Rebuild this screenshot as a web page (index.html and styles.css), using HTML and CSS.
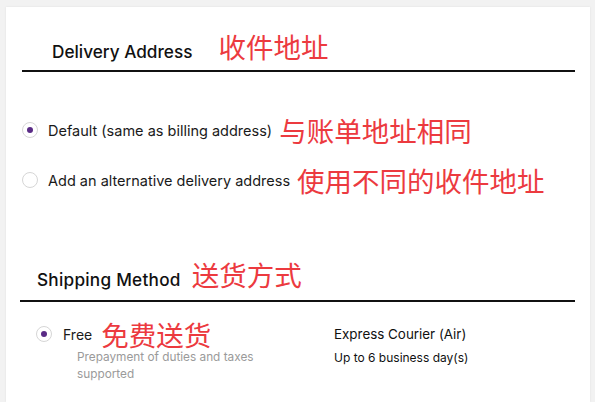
FILE: index.html
```html
<!DOCTYPE html>
<html lang="en">
<head>
<meta charset="utf-8">
<title>Delivery</title>
<link rel="stylesheet" href="styles.css">
</head>
<body>
<div class="card">
  <div class="section-head head-delivery">
    <span class="title">Delivery Address</span>
    <span class="note note-gap-lg">收件地址</span>
  </div>
  <div class="options">
    <div class="option">
      <span class="radio checked"></span>
      <span class="label">Default (same as billing address)</span>
      <span class="note note-gap-sm">与账单地址相同</span>
    </div>
    <div class="option">
      <span class="radio"></span>
      <span class="label">Add an alternative delivery address</span>
      <span class="note note-gap-sm">使用不同的收件地址</span>
    </div>
  </div>
  <div class="section-head head-shipping">
    <span class="title title-wide">Shipping Method</span>
    <span class="note note-gap-md">送货方式</span>
  </div>
  <div class="shipping">
    <div class="ship-choice">
      <div class="option ship-row">
        <span class="radio checked"></span>
        <span class="label label-free">Free</span>
        <span class="note note-gap-xs">免费送货</span>
      </div>
      <p class="desc">Prepayment of duties and taxes<br>supported</p>
    </div>
    <div class="ship-info">
      <div class="ship-name">Express Courier (Air)</div>
      <div class="ship-time">Up to 6 business day(s)</div>
    </div>
  </div>
</div>
</body>
</html>
```
FILE: styles.css
```css
html, body {
  margin: 0;
  padding: 0;
  background: #f2f2f2;
  height: 402px;
  overflow: hidden;
}
body {
  font-family: Inter, "Noto Sans", "Noto Sans CJK SC", sans-serif;
  color: #111;
}
.card {
  margin: 7px 5px 0 6px;
  height: 395px;
  background: #fff;
  box-shadow: 0 0 2px rgba(0, 0, 0, 0.08);
}
.section-head {
  display: flex;
  align-items: baseline;
  border-bottom: 2px solid #111;
  padding-bottom: 7px;
}
.head-delivery {
  margin: 0 15px 0 16px;
  padding-top: 23px;
  padding-left: 30px;
  padding-bottom: 8px;
}
.head-shipping {
  margin: 42px 15px 0 14px;
  padding-top: 11px;
  padding-left: 17px;
  padding-bottom: 10px;
}
.title {
  font-size: 17.2px;
  font-weight: 500;
}
.title-wide {
  letter-spacing: 0.25px;
}
.note {
  font-family: "Noto Sans CJK SC", sans-serif;
  font-size: 27.5px;
  line-height: 32px;
  color: #ec3a3f;
}
.note-gap-lg { margin-left: 26px; }
.note-gap-md { margin-left: 11px; }
.note-gap-sm { margin-left: 7px; }
.note-gap-xs { margin-left: 9px; }
.options {
  margin: 33px 0 0 16px;
}
.option {
  display: flex;
  align-items: center;
  height: 50px;
}
.radio {
  box-sizing: border-box;
  width: 16px;
  height: 16px;
  border: 1px solid #d6d6d6;
  border-radius: 50%;
  margin-right: 10px;
  display: flex;
  align-items: center;
  justify-content: center;
  flex: none;
}
.radio.checked::after {
  content: "";
  width: 6px;
  height: 6px;
  border-radius: 50%;
  background: #5a2b86;
}
.label {
  font-size: 14.5px;
  color: #1a1a1a;
}
.label-free {
  font-size: 14px;
}
.shipping {
  display: flex;
  margin: 17px 0 0 30px;
}
.ship-choice {
  width: 298px;
}
.ship-row {
  height: 30px;
}
.ship-row .note {
  line-height: 26px;
}
.ship-row .radio {
  margin-right: 11px;
}
.desc {
  margin: 0 0 0 41px;
  font-size: 11.8px;
  line-height: 17px;
  color: #9a9a9a;
}
.ship-info {
  font-size: 13.4px;
}
.ship-name {
  line-height: 30px;
}
.ship-time {
  font-size: 12px;
  line-height: 17px;
}
```
